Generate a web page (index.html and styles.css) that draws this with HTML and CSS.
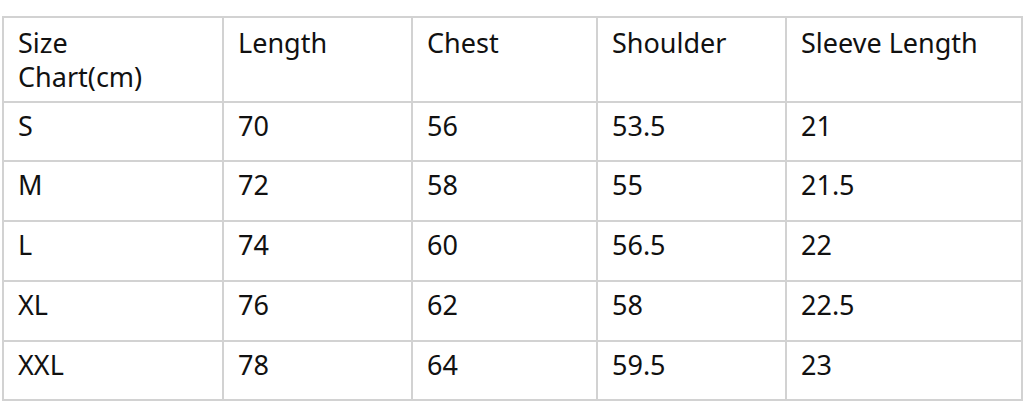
FILE: index.html
```
<!DOCTYPE html>
<html lang="en">
<head>
<meta charset="utf-8">
<title>Size Chart</title>
<link rel="stylesheet" href="styles.css">
</head>
<body>
<table class="size-table">
  <colgroup>
    <col class="c1"><col class="c2"><col class="c3"><col class="c4"><col class="c5">
  </colgroup>
  <thead>
    <tr class="head-row">
      <th>Size<br>Chart(cm)</th>
      <th>Length</th>
      <th>Chest</th>
      <th>Shoulder</th>
      <th>Sleeve Length</th>
    </tr>
  </thead>
  <tbody>
    <tr class="row r59"><td>S</td><td>70</td><td>56</td><td>53.5</td><td>21</td></tr>
    <tr class="row"><td>M</td><td>72</td><td>58</td><td>55</td><td>21.5</td></tr>
    <tr class="row"><td>L</td><td>74</td><td>60</td><td>56.5</td><td>22</td></tr>
    <tr class="row"><td>XL</td><td>76</td><td>62</td><td>58</td><td>22.5</td></tr>
    <tr class="row r59"><td>XXL</td><td>78</td><td>64</td><td>59.5</td><td>23</td></tr>
  </tbody>
</table>
</body>
</html>
```
FILE: styles.css
```
html, body {
  margin: 0;
  padding: 0;
  background: #ffffff;
}

body {
  padding: 16px 0 0 2px;
  font-family: "Noto Sans", "Liberation Sans", sans-serif;
  color: #111111;
}

.size-table {
  border-collapse: separate;
  border-spacing: 0;
  table-layout: fixed;
  width: 1021px;
  border-top: 2px solid #d2d2d2;
  border-left: 2px solid #d2d2d2;
}

.c1 { width: 220px; }
.c2 { width: 189px; }
.c3 { width: 185px; }
.c4 { width: 189px; }
.c5 { width: 236px; }

.size-table th,
.size-table td {
  box-sizing: border-box;
  border-right: 2px solid #d2d2d2;
  border-bottom: 2px solid #d2d2d2;
  padding: 0 0 0 14px;
  text-align: left;
  vertical-align: top;
  font-size: 27px;
  font-weight: 400;
  line-height: 34px;
}

.head-row th {
  height: 85px;
  padding-top: 8px;
}

.row td {
  height: 60px;
  padding-top: 6px;
}

.row.r59 td {
  height: 59px;
}
```
